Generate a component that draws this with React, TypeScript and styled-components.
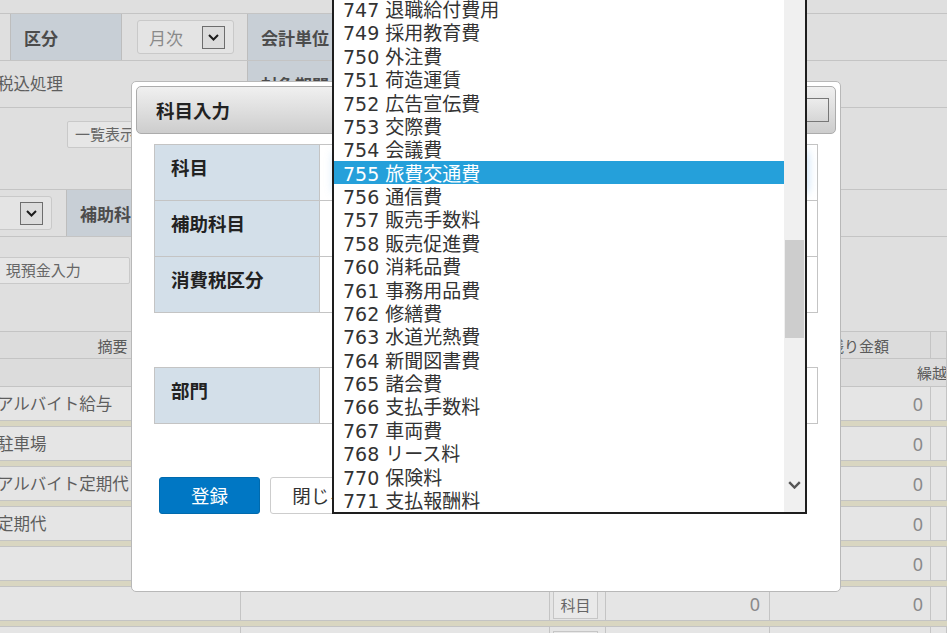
import React from "react";
import styled, { createGlobalStyle } from "styled-components";

const GlobalStyle = createGlobalStyle`
  html, body {
    margin: 0;
    padding: 0;
  }
  body {
    width: 947px;
    height: 633px;
    overflow: hidden;
    background: #dfdfdf;
    font-family: "Noto Sans", "Noto Sans CJK JP", sans-serif;
  }
`;

const Screen = styled.div`
  position: relative;
  width: 947px;
  height: 633px;
  overflow: hidden;
`;

/* ---------- background page (greyed by the dialog) ---------- */

const Backdrop = styled.div`
  width: 947px;
  height: 633px;
  overflow: hidden;
  background: #dfdfdf;
  color: #5a5a5a;
`;

const TopStrip = styled.div`
  height: 14px;
  box-sizing: border-box;
  border-bottom: 1px solid #c4c4c4;
`;

const FormRow = styled.div<{ $h: number; $line?: boolean }>`
  display: flex;
  height: ${(p) => p.$h}px;
  box-sizing: border-box;
  border-bottom: ${(p) => (p.$line ? "1px solid #c4c4c4" : "none")};
`;

const Cell = styled.div<{ $w?: number }>`
  flex: ${(p) => (p.$w ? "none" : "1")};
  width: ${(p) => (p.$w ? `${p.$w}px` : "auto")};
  display: flex;
  align-items: center;
  box-sizing: border-box;
`;

const TopCell = styled(Cell)`
  align-items: flex-start;
`;

const HeadCell = styled(Cell)`
  background: #c8cfd6;
  border-left: 1px solid #bdbdbd;
  border-right: 1px solid #bdbdbd;
  padding-left: 13px;
  font-size: 17px;
  font-weight: 700;
  color: #4c4c4c;
`;

const PlainText = styled.span`
  margin-left: -3px;
  margin-top: -2px;
  font-size: 16.5px;
  color: #5e5e5e;
`;

const MiniSelect = styled.div<{ $w: number; $offset: number }>`
  display: flex;
  align-items: center;
  justify-content: space-between;
  width: ${(p) => p.$w}px;
  height: 34px;
  margin-left: ${(p) => p.$offset}px;
  padding: 0 8px 0 11px;
  box-sizing: border-box;
  border: 1px solid #c9c9c9;
  border-radius: 3px;
  background: #e4e4e4;
  font-size: 17px;
  color: #8a8a8a;
`;

const ArrowBox = styled.span`
  display: flex;
  align-items: center;
  justify-content: center;
  width: 23px;
  height: 23px;
  box-sizing: border-box;
  border: 1px solid #6d6d6d;
  background: #dcdcdc;
`;

const GreyButton = styled.div<{ $w: number; $left: number; $top: number }>`
  width: ${(p) => p.$w}px;
  height: 27px;
  margin-left: ${(p) => p.$left}px;
  margin-top: ${(p) => p.$top}px;
  padding-left: 7px;
  box-sizing: border-box;
  border: 1px solid #c9c9c9;
  border-radius: 2px;
  background: #e6e6e6;
  font-size: 15px;
  line-height: 25px;
  color: #666;
  white-space: nowrap;
  overflow: hidden;
`;

const COLS = "241px 309px 56px 164px 161px 1fr";

const HeaderRow = styled.div<{ $cols: string; $h: number; $top?: boolean }>`
  display: grid;
  grid-template-columns: ${(p) => p.$cols};
  height: ${(p) => p.$h}px;
  box-sizing: border-box;
  border-top: ${(p) => (p.$top ? "1px solid #c4c4c4" : "none")};
  border-bottom: 1px solid #c4c4c4;
  background: #dcdcdc;
  font-size: 15px;
  color: #5a5a5a;
`;

const HCell = styled.div<{ $align?: string; $pl?: number; $pr?: number }>`
  display: flex;
  align-items: center;
  justify-content: ${(p) => p.$align || "center"};
  padding-left: ${(p) => p.$pl || 0}px;
  padding-right: ${(p) => p.$pr || 0}px;
  border-right: 1px solid #c4c4c4;
  white-space: nowrap;
  overflow: hidden;
`;

const DataRow = styled.div`
  display: grid;
  grid-template-columns: ${COLS};
  height: 34px;
  box-sizing: border-box;
  border-bottom: 1px solid #c4c4c4;
  background: #e5e5e5;
`;

const DCell = styled.div<{ $right?: boolean; $pr?: number }>`
  display: flex;
  align-items: center;
  justify-content: ${(p) => (p.$right ? "flex-end" : "flex-start")};
  padding-right: ${(p) => p.$pr || 0}px;
  border-right: 1px solid #c4c4c4;
  font-size: 16.5px;
  color: #666;
  white-space: nowrap;
  overflow: hidden;
`;

const Amount = styled.span`
  font-size: 18px;
  color: #8a8a8a;
`;

const RowButton = styled.div`
  width: 45px;
  height: 28px;
  margin-left: 3px;
  margin-top: 4px;
  align-self: flex-start;
  box-sizing: border-box;
  border: 1px solid #c6c6c6;
  background: #e9e9e9;
  font-size: 15px;
  line-height: 26px;
  text-align: center;
  color: #666;
`;

const Stripe = styled.div`
  height: 6px;
  box-sizing: border-box;
  border-bottom: 1px solid #c4c4c4;
  background: #d9d6c1;
`;

/* ---------- dialog ---------- */

const Dialog = styled.div`
  position: absolute;
  left: 131px;
  top: 81px;
  width: 710px;
  height: 511px;
  box-sizing: border-box;
  padding: 4px;
  border: 1px solid #b8b8b8;
  border-radius: 5px;
  background: #fff;
  display: flex;
  flex-direction: column;
`;

const DialogHeader = styled.div`
  display: flex;
  align-items: center;
  height: 48px;
  box-sizing: border-box;
  padding-left: 19px;
  border: 1px solid #acacac;
  border-radius: 5px;
  background: linear-gradient(#f0f0f0, #cdcdcd);
`;

const DialogTitle = styled.span`
  font-size: 18.5px;
  font-weight: 700;
  color: #222;
`;

const CloseBox = styled.div`
  margin-left: auto;
  margin-right: 6px;
  width: 60px;
  height: 24px;
  box-sizing: border-box;
  border: 1px solid #777;
  background: linear-gradient(#ececec, #d6d6d6);
`;

const DialogBody = styled.div`
  padding: 10px 18px 0;
`;

const FieldTable = styled.div<{ $gap: number }>`
  margin-top: ${(p) => p.$gap}px;
  border-top: 1px solid #c4c4c4;
  border-left: 1px solid #c4c4c4;
  border-right: 1px solid #c4c4c4;
`;

const FieldRow = styled.div`
  display: grid;
  grid-template-columns: 165px 1fr;
  height: 56px;
  box-sizing: border-box;
  border-bottom: 1px solid #c4c4c4;
`;

const FieldLabel = styled.div`
  padding: 9px 16px 0;
  border-right: 1px solid #c4c4c4;
  background: #d3dfe9;
  font-size: 18.5px;
  font-weight: 700;
  color: #222;
`;

const FieldValue = styled.div`
  padding: 8px 11px 8px 16px;
`;

const FieldBox = styled.div<{ $focus?: boolean }>`
  height: 38px;
  box-sizing: border-box;
  border: 1px solid ${(p) => (p.$focus ? "#8cbde6" : "#c9c9c9")};
  border-radius: 3px;
  background: #fff;
  box-shadow: ${(p) => (p.$focus ? "0 0 8px 3px rgba(120, 180, 235, 0.35)" : "none")};
`;

const ButtonRow = styled.div`
  display: flex;
  gap: 10px;
  margin-top: 53px;
  margin-left: 5px;
`;

const PrimaryButton = styled.div`
  width: 101px;
  height: 37px;
  box-sizing: border-box;
  border: 1px solid #006aad;
  border-radius: 3px;
  background: #0077c4;
  color: #fff;
  font-size: 18.5px;
  line-height: 35px;
  text-align: center;
`;

const SecondaryButton = styled(PrimaryButton)`
  width: 100px;
  border-color: #cdcdcd;
  background: #fff;
  color: #333;
`;

/* ---------- open drop-down list ---------- */

const ListBox = styled.div`
  position: absolute;
  left: 332px;
  top: -5px;
  width: 475px;
  height: 519px;
  box-sizing: border-box;
  border: 2px solid #1e1e1e;
  background: #fff;
  display: flex;
  overflow: hidden;
`;

const Options = styled.div`
  flex: 1;
  overflow: hidden;
`;

const Option = styled.div<{ $active?: boolean }>`
  height: 23.38px;
  padding-left: 9px;
  line-height: 23.38px;
  font-family: "DejaVu Sans", "Noto Sans CJK JP", sans-serif;
  font-size: 19px;
  white-space: nowrap;
  color: ${(p) => (p.$active ? "#fff" : "#333")};
  background: ${(p) => (p.$active ? "#25a0da" : "transparent")};
`;

const Name = styled.span`
  font-family: "Noto Sans CJK JP", sans-serif;
`;

const ScrollTrack = styled.div`
  position: relative;
  width: 21px;
  background: #f0f0f0;
`;

const ScrollThumb = styled.div<{ $top: number; $h: number }>`
  position: absolute;
  left: 1px;
  right: 1px;
  top: ${(p) => p.$top}px;
  height: ${(p) => p.$h}px;
  background: #cdcdcd;
`;

const ScrollArrow = styled.svg`
  position: absolute;
  left: 4px;
  bottom: 23px;
`;

const Chevron = () => (
  <svg width="11" height="7" viewBox="0 0 11 7">
    <path d="M1 1l4.5 4.5L10 1" fill="none" stroke="#1c1c1c" strokeWidth="2" />
  </svg>
);

const records = ["アルバイト給与", "駐車場", "アルバイト定期代", "定期代", "", "", ""];

const accounts: [string, string][] = [
  ["747", "退職給付費用"],
  ["749", "採用教育費"],
  ["750", "外注費"],
  ["751", "荷造運賃"],
  ["752", "広告宣伝費"],
  ["753", "交際費"],
  ["754", "会議費"],
  ["755", "旅費交通費"],
  ["756", "通信費"],
  ["757", "販売手数料"],
  ["758", "販売促進費"],
  ["760", "消耗品費"],
  ["761", "事務用品費"],
  ["762", "修繕費"],
  ["763", "水道光熱費"],
  ["764", "新聞図書費"],
  ["765", "諸会費"],
  ["766", "支払手数料"],
  ["767", "車両費"],
  ["768", "リース料"],
  ["770", "保険料"],
  ["771", "支払報酬料"],
  ["772", "租税公課"],
];

const App = () => {
  const selected = "755";

  return (
    <Screen>
      <GlobalStyle />
      <Backdrop>
        <TopStrip />
        <FormRow $h={47} $line>
          <Cell $w={10} />
          <HeadCell $w={112}>区分</HeadCell>
          <Cell $w={125}>
            <MiniSelect $w={97} $offset={15}>
              月次
              <ArrowBox>
                <Chevron />
              </ArrowBox>
            </MiniSelect>
          </Cell>
          <HeadCell $w={160}>会計単位</HeadCell>
          <Cell />
        </FormRow>
        <FormRow $h={47} $line>
          <Cell $w={247}>
            <PlainText>税込処理</PlainText>
          </Cell>
          <HeadCell $w={160}>対象期間</HeadCell>
          <Cell />
        </FormRow>
        <FormRow $h={82} $line>
          <TopCell>
            <GreyButton $w={100} $left={67} $top={13}>
              一覧表示
            </GreyButton>
          </TopCell>
        </FormRow>
        <FormRow $h={47} $line>
          <Cell $w={66}>
            <MiniSelect $w={102} $offset={-50}>
              <span />
              <ArrowBox>
                <Chevron />
              </ArrowBox>
            </MiniSelect>
          </Cell>
          <HeadCell $w={160}>補助科目</HeadCell>
          <Cell />
        </FormRow>
        <FormRow $h={94}>
          <TopCell>
            <GreyButton $w={140} $left={-10} $top={20}>
              &nbsp;&nbsp;現預金入力
            </GreyButton>
          </TopCell>
        </FormRow>

        <HeaderRow $cols={COLS} $h={28} $top>
          <HCell $pr={15}>摘要</HCell>
          <HCell />
          <HCell />
          <HCell>金額</HCell>
          <HCell $align="flex-end" $pr={41}>
            残り金額
          </HCell>
          <HCell />
        </HeaderRow>
        <HeaderRow $cols="770px 1fr" $h={28}>
          <HCell />
          <HCell $align="flex-start" $pl={147}>
            繰越金額
          </HCell>
        </HeaderRow>

        {records.map((text, i) => (
          <React.Fragment key={i}>
            <DataRow>
              <DCell>
                <PlainText>{text}</PlainText>
              </DCell>
              <DCell />
              <DCell>
                <RowButton>科目</RowButton>
              </DCell>
              <DCell $right $pr={9}>
                <Amount>0</Amount>
              </DCell>
              <DCell $right $pr={7}>
                <Amount>0</Amount>
              </DCell>
              <DCell />
            </DataRow>
            <Stripe />
          </React.Fragment>
        ))}
      </Backdrop>

      <Dialog>
        <DialogHeader>
          <DialogTitle>科目入力</DialogTitle>
          <CloseBox />
        </DialogHeader>
        <DialogBody>
          <FieldTable $gap={0}>
            <FieldRow>
              <FieldLabel>科目</FieldLabel>
              <FieldValue>
                <FieldBox $focus />
              </FieldValue>
            </FieldRow>
            <FieldRow>
              <FieldLabel>補助科目</FieldLabel>
              <FieldValue>
                <FieldBox />
              </FieldValue>
            </FieldRow>
            <FieldRow>
              <FieldLabel>消費税区分</FieldLabel>
              <FieldValue>
                <FieldBox />
              </FieldValue>
            </FieldRow>
          </FieldTable>
          <FieldTable $gap={54}>
            <FieldRow>
              <FieldLabel>部門</FieldLabel>
              <FieldValue>
                <FieldBox />
              </FieldValue>
            </FieldRow>
          </FieldTable>
          <ButtonRow>
            <PrimaryButton>登録</PrimaryButton>
            <SecondaryButton>閉じる</SecondaryButton>
          </ButtonRow>
        </DialogBody>
      </Dialog>

      <ListBox>
        <Options>
          {accounts.map(([code, name]) => (
            <Option key={code} $active={code === selected}>
              {code} <Name>{name}</Name>
            </Option>
          ))}
        </Options>
        <ScrollTrack>
          <ScrollThumb $top={243} $h={98} />
          <ScrollArrow width="13" height="8" viewBox="0 0 13 8">
            <path d="M1.2 1.2l5.3 5.3 5.3-5.3" fill="none" stroke="#555" strokeWidth="2.4" />
          </ScrollArrow>
        </ScrollTrack>
      </ListBox>
    </Screen>
  );
};

export default App;
